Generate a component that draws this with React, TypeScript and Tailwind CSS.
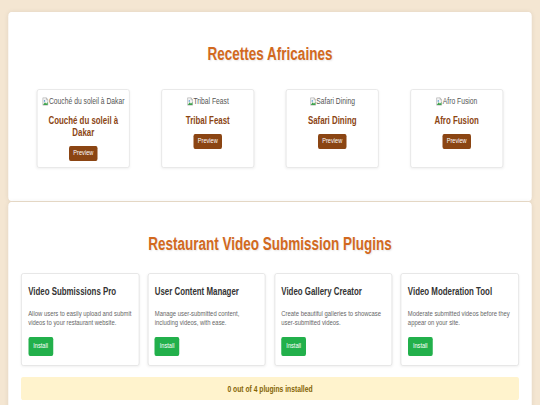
import React from 'react'

// The page is laid out on a 720px-wide canvas and squeezed horizontally to fit 540px.

const recipes = ['Couché du soleil à Dakar', 'Tribal Feast', 'Safari Dining', 'Afro Fusion']

const plugins = [
  {
    name: 'Video Submissions Pro',
    description: 'Allow users to easily upload and submit videos to your restaurant website.',
  },
  {
    name: 'User Content Manager',
    description: 'Manage user-submitted content, including videos, with ease.',
  },
  {
    name: 'Video Gallery Creator',
    description: 'Create beautiful galleries to showcase user-submitted videos.',
  },
  {
    name: 'Video Moderation Tool',
    description: 'Moderate submitted videos before they appear on your site.',
  },
]

function BrokenImage() {
  return (
    <svg viewBox="0 0 16 16" className="h-[9px] w-[9px] shrink-0">
      <path d="M2 1.5h8.5l3.5 3.5v9.5H2z" fill="#f4f4f4" stroke="#9a9a9a" strokeWidth="1" />
      <path d="M10.5 1.5v3.5H14" fill="none" stroke="#9a9a9a" strokeWidth="1" />
      <circle cx="6" cy="7" r="1.6" fill="#5b9bd5" />
      <path d="M2.5 14 L7 9.5 L10 12 L13.5 9 V14z" fill="#3fa34d" />
    </svg>
  )
}

function RecipeCard({ name }: { name: string }) {
  return (
    <div className="w-[123.75px] rounded-[3px] border border-[#e6e6e6] bg-white p-[5.6px] text-center shadow-[0_1px_3px_rgba(0,0,0,0.06)]">
      <div className="flex h-[10.35px] items-center justify-center whitespace-nowrap text-[9px] leading-[10.35px] text-[#555]">
        <BrokenImage />
        <span>{name}</span>
      </div>
      <h3 className="mt-[7.3px] mb-[8.2px] text-[10.53px] leading-[12.1px] font-bold text-[#8b4513]">{name}</h3>
      <button className="mx-auto block rounded-[2.25px] bg-[#8b4513] px-[5.6px] py-[3.2px] text-[7.5px] leading-[8.6px] text-white">
        Preview
      </button>
    </div>
  )
}

function PluginCard({ name, description }: { name: string; description: string }) {
  return (
    <div className="rounded-[3px] border border-[#e4e4e4] bg-white px-[8.44px] pt-[11.2px] pb-[9.3px] shadow-[0_1px_3px_rgba(0,0,0,0.06)]">
      <h3 className="text-[10.53px] leading-[12.1px] font-bold text-[#333]">{name}</h3>
      <p className="mt-[11.2px] text-[7.875px] leading-[9.06px] text-[#666]">{description}</p>
      <button className="mt-[9.7px] block rounded-[2.25px] bg-[#22b04b] px-[6.75px] py-[5.2px] text-[7.5px] leading-[8.6px] text-white">
        Install
      </button>
    </div>
  )
}

export default function App() {
  const installed = 0

  return (
    <div className="h-screen overflow-hidden bg-[#f4e6d2]">
      <div className="w-[720px] origin-top-left scale-x-75 px-[11.25px] pt-[11.8px] font-['Liberation_Sans',Arial,sans-serif]">
        {/* Recipes */}
        <section className="rounded-[4.5px] bg-white px-[16.9px] pt-[16.9px] pb-[33px] shadow-[0_0_6px_rgba(0,0,0,0.08)]">
          <h1 className="mt-[15.25px] text-center text-[18px] leading-[20.7px] font-bold text-[#d2691e] [text-shadow:1px_1px_2px_rgba(0,0,0,0.1)]">
            Recettes Africaines
          </h1>
          <div className="mt-[24.8px] flex items-stretch justify-around">
            {recipes.map((r) => (
              <RecipeCard key={r} name={r} />
            ))}
          </div>
        </section>

        {/* Plugins */}
        <section className="mt-[1.5px] rounded-[4.5px] bg-white px-[16.9px] pt-[16.9px] pb-[16.9px] shadow-[0_0_6px_rgba(0,0,0,0.08)]">
          <h1 className="mt-[15.4px] text-center text-[18px] leading-[20.7px] font-bold text-[#d2691e] [text-shadow:1px_1px_2px_rgba(0,0,0,0.1)]">
            Restaurant Video Submission Plugins
          </h1>
          <div className="mt-[18.2px] grid grid-cols-4 gap-[11.25px]">
            {plugins.map((p) => (
              <PluginCard key={p.name} name={p.name} description={p.description} />
            ))}
          </div>
          <div className="mt-[11.5px] rounded-[2.8px] bg-[#fff3cd] py-[6.2px] text-center text-[9px] leading-[10.35px] font-bold text-[#856404]">
            {installed} out of {plugins.length} plugins installed
          </div>
        </section>
      </div>
    </div>
  )
}
